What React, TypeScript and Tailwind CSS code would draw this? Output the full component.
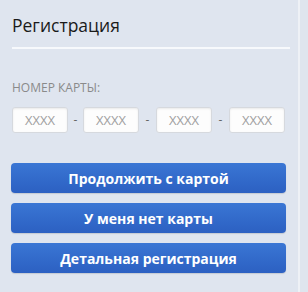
import React from 'react';

const font = { fontFamily: '"Open Sans", "Noto Sans", sans-serif' };

function CardInput() {
  return (
    <input
      type="text"
      placeholder="XXXX"
      className="w-[56px] h-[26px] rounded-[3px] border border-[#d6d9de] bg-[#fdfdfd] text-center text-[13px] text-[#555] placeholder:text-[#a0a0a0] shadow-[inset_0_1px_2px_rgba(0,0,0,0.08)] outline-none"
    />
  );
}

export default function App() {
  const buttons = ['Продолжить с картой', 'У меня нет карты', 'Детальная регистрация'];

  return (
    <div className="w-[308px] h-[292px] flex bg-[#dfe5ee]" style={font}>
      <div className="w-[300px] h-full bg-[#dfe5ef] border-r-2 border-[#eef1f6]">
        <div className="px-3 pt-[13px]">
          <h2 className="text-[17.5px] leading-[24px] font-medium text-[#1a1a1a]">Регистрация</h2>
          <div className="mt-[10px] w-[278px] h-[2px] bg-[#f7f9fc]" />

          <div className="mt-[31px] text-[12px] leading-[16px] text-[#8a8a8a] uppercase">Номер карты:</div>

          <div className="mt-[11px] flex items-center">
            <CardInput />
            <span className="w-[15px] text-center text-[12px] text-[#666]">-</span>
            <CardInput />
            <span className="w-[17px] text-center text-[12px] text-[#666]">-</span>
            <CardInput />
            <span className="w-[17px] text-center text-[12px] text-[#666]">-</span>
            <CardInput />
          </div>

          <div className="mt-[30px] flex flex-col gap-[10px] -ml-px w-[275px]">
            {buttons.map((label) => (
              <button
                key={label}
                className="h-[30px] rounded-[4px] bg-gradient-to-b from-[#3a76d4] to-[#2c60c2] text-white text-[14px] font-bold shadow-[0_1px_1px_rgba(0,0,0,0.12)]"
              >
                {label}
              </button>
            ))}
          </div>
        </div>
      </div>
    </div>
  );
}
